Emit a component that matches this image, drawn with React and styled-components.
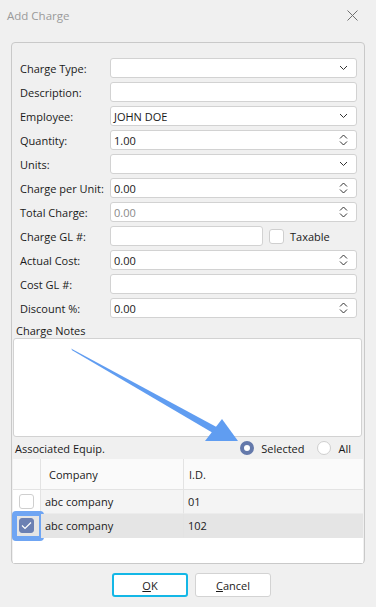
import React from 'react';
import styled, { createGlobalStyle } from 'styled-components';

const GlobalStyle = createGlobalStyle`
  body {
    margin: 0;
    background: #f0f0f0;
    font-family: "Segoe UI", "Open Sans", "Noto Sans", sans-serif;
    font-size: 11px;
    color: #1a1a1a;
  }
`;

const Dialog = styled.div`
  width: 376px;
  height: 607px;
  display: flex;
  flex-direction: column;
  position: relative;
  overflow: hidden;
`;

const TitleBar = styled.div`
  height: 30px;
  display: flex;
  align-items: center;
  justify-content: space-between;
  padding: 0 18px 0 7px;
`;

const Title = styled.span`
  color: #9a9a9a;
  font-size: 11.5px;
`;

const GroupBox = styled.div`
  margin: 12px 0 0 11px;
  width: 352px;
  height: 520px;
  border: 1px solid #c9c9c9;
  border-radius: 4px;
  display: flex;
  flex-direction: column;
  position: relative;
`;

const Form = styled.div`
  display: grid;
  grid-template-columns: 90px 1fr;
  row-gap: 4px;
  padding: 15px 7px 0 8px;
`;

const Label = styled.label`
  height: 20px;
  display: flex;
  align-items: center;
  white-space: nowrap;
`;

const Field = styled.div`
  height: 20px;
  box-sizing: border-box;
  border: 1px solid #d2d2d2;
  border-radius: 3px;
  background: #fff;
  display: flex;
  align-items: center;
  justify-content: space-between;
  padding: 0 8px 0 3px;
  color: ${(p) => (p.$muted ? '#8a8a8a' : '#1a1a1a')};
  flex: 1;
`;

const SplitRow = styled.div`
  display: flex;
  align-items: center;
  gap: 6px;
`;

const ShortField = styled(Field)`
  flex: 0 0 153px;
`;

const Check = styled.span`
  width: 15px;
  height: 15px;
  box-sizing: border-box;
  border: 1px solid #cfcfcf;
  border-radius: 3px;
  background: #fff;
  display: inline-flex;
  align-items: center;
  justify-content: center;
  flex: none;
  ${(p) => p.$checked && `
    background: #6b80b3;
    border-color: #6b80b3;
  `}
`;

const NotesLabel = styled.div`
  height: 16px;
  margin-top: 4px;
  padding-left: 4px;
  display: flex;
  align-items: center;
`;

const Notes = styled.div`
  margin: 0 2px 0 1px;
  height: 99px;
  box-sizing: border-box;
  border: 1px solid #d2d2d2;
  border-radius: 3px;
  background: #fff;
`;

const EquipBar = styled.div`
  height: 22px;
  display: flex;
  align-items: center;
  padding: 0 13px 0 3px;
`;

const Spacer = styled.div`
  flex: 1;
`;

const RadioItem = styled.span`
  display: inline-flex;
  align-items: center;
  gap: 7px;
  margin-left: ${(p) => p.$gap || 0}px;
`;

const Radio = styled.span`
  width: 14px;
  height: 14px;
  box-sizing: border-box;
  border-radius: 50%;
  background: #fff;
  border: ${(p) => (p.$on ? '4px solid #6479ab' : '1px solid #cfcfcf')};
`;

const Grid = styled.div`
  margin: 0 1px 0 1px;
  flex: 1;
  background: #fff;
  display: grid;
  grid-template-columns: 28px 143px 1fr;
  grid-auto-rows: max-content;
`;

const HeadCell = styled.div`
  height: 30px;
  background: #fafafa;
  border-bottom: 1px solid #e3e3e3;
  border-right: ${(p) => (p.$last ? 'none' : '1px solid #e3e3e3')};
  display: flex;
  align-items: center;
  padding-left: ${(p) => p.$pad || 0}px;
`;

const Cell = styled.div`
  height: 24px;
  box-sizing: border-box;
  background: ${(p) => (p.$sel ? '#e5e5e5' : '#f4f4f4')};
  border-bottom: 1px solid ${(p) => (p.$sel ? '#e5e5e5' : '#ececec')};
  border-right: ${(p) => (p.$last ? 'none' : '1px solid #e3e3e3')};
  display: flex;
  align-items: center;
  justify-content: ${(p) => (p.$center ? 'center' : 'flex-start')};
  padding-left: ${(p) => p.$pad || 0}px;
  position: relative;
`;

const CheckCell = styled(Cell)`
  background: ${(p) => (p.$sel ? '#e5e5e5' : '#fff')};
  border-bottom-color: #fff;
`;

const Highlight = styled.span`
  position: absolute;
  left: -1px;
  top: -3px;
  width: 32px;
  height: 30px;
  box-sizing: border-box;
  border: 5px solid #6fa5f3;
  border-radius: 4px;
`;

const Buttons = styled.div`
  display: flex;
  justify-content: center;
  gap: 7px;
  margin-top: 9px;
  padding-left: 7px;
`;

const Button = styled.button`
  width: 76px;
  height: 24px;
  box-sizing: border-box;
  background: #fff;
  border: ${(p) => (p.$primary ? '2px solid #14b7e6' : '1px solid #d3d3d3')};
  border-radius: 3px;
  font: inherit;
  color: #1a1a1a;
  padding: 0;
  u { text-decoration: underline; }
`;

const ArrowLayer = styled.svg`
  position: absolute;
  left: 0;
  top: 0;
  pointer-events: none;
`;

const Chevron = () => (
  <svg width="9" height="6" viewBox="0 0 9 6">
    <path d="M1 1 L4.5 4.5 L8 1" fill="none" stroke="#333" strokeWidth="1" />
  </svg>
);

const Spin = () => (
  <svg width="9" height="12" viewBox="0 0 9 12">
    <path d="M1 4.5 L4.5 1 L8 4.5 M1 7.5 L4.5 11 L8 7.5" fill="none" stroke="#333" strokeWidth="1" />
  </svg>
);

const Tick = () => (
  <svg width="11" height="9" viewBox="0 0 11 9">
    <path d="M1 4.5 L4 7.5 L10 1.5" fill="none" stroke="#fff" strokeWidth="1.2" />
  </svg>
);

const rows = [
  ['Charge Type:', '', 'drop'],
  ['Description:', '', null],
  ['Employee:', 'JOHN DOE', 'drop'],
  ['Quantity:', '1.00', 'spin'],
  ['Units:', '', 'drop'],
  ['Charge per Unit:', '0.00', 'spin'],
  ['Total Charge:', '0.00', 'spin', true],
];

const rows2 = [
  ['Actual Cost:', '0.00', 'spin'],
  ['Cost GL #:', '', null],
  ['Discount %:', '0.00', 'spin'],
];

const renderRow = ([label, value, kind, muted]) => (
  <React.Fragment key={label}>
    <Label>{label}</Label>
    <Field $muted={muted}>
      <span>{value}</span>
      {kind === 'drop' && <Chevron />}
      {kind === 'spin' && <Spin />}
    </Field>
  </React.Fragment>
);

const App = () => {
  return (
    <Dialog>
      <GlobalStyle />
      <TitleBar>
        <Title>Add Charge</Title>
        <svg width="11" height="11" viewBox="0 0 11 11">
          <path d="M0.5 0.5 L10.5 10.5 M10.5 0.5 L0.5 10.5" stroke="#707070" strokeWidth="1" />
        </svg>
      </TitleBar>
      <GroupBox>
        <Form>
          {rows.map(renderRow)}
          <Label>Charge GL #:</Label>
          <SplitRow>
            <ShortField />
            <Check />
            <span>Taxable</span>
          </SplitRow>
          {rows2.map(renderRow)}
        </Form>
        <NotesLabel>Charge Notes</NotesLabel>
        <Notes />
        <EquipBar>
          <span>Associated Equip.</span>
          <Spacer />
          <RadioItem>
            <Radio $on />
            Selected
          </RadioItem>
          <RadioItem $gap={13}>
            <Radio />
            All
          </RadioItem>
        </EquipBar>
        <Grid>
          <HeadCell />
          <HeadCell $pad={8}>Company</HeadCell>
          <HeadCell $pad={5} $last>I.D.</HeadCell>
          <CheckCell $center>
            <Check />
          </CheckCell>
          <Cell $pad={4}>abc company</Cell>
          <Cell $pad={4} $last>01</Cell>
          <CheckCell $center $sel>
            <Check $checked>
              <Tick />
            </Check>
            <Highlight />
          </CheckCell>
          <Cell $pad={4} $sel>abc company</Cell>
          <Cell $pad={4} $sel $last>102</Cell>
        </Grid>
      </GroupBox>
      <Buttons>
        <Button $primary><u>O</u>K</Button>
        <Button><u>C</u>ancel</Button>
      </Buttons>
      <ArrowLayer width="376" height="607" viewBox="0 0 376 607">
        <defs>
          <filter id="soft" x="-10%" y="-10%" width="120%" height="120%">
            <feGaussianBlur stdDeviation="0.6" />
          </filter>
        </defs>
        <g filter="url(#soft)" fill="#619df1">
          <path d="M71 348.5 L72.5 350.5 L213 433 L216.5 427 Z" />
          <path d="M222 419 L238 441 L205 441 Z" />
        </g>
      </ArrowLayer>
    </Dialog>
  );
};

export default App;
